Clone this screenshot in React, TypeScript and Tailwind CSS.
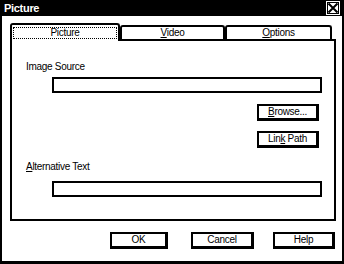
import React from "react";

const font = { fontFamily: '"Liberation Sans", Arial, sans-serif' };

function Btn({ w, children }: { w: string; children: React.ReactNode }) {
  return (
    <div
      className={`${w} h-[17px] bg-white border-2 border-r-[3px] border-b-[3px] border-black flex items-center justify-center text-[10px] tracking-[-0.3px] leading-none text-black`}
    >
      {children}
    </div>
  );
}

export default function App() {
  return (
    <div
      className="w-[344px] h-[264px] bg-white border-l-2 border-r-2 border-b-[3px] border-black flex flex-col overflow-hidden"
      style={font}
    >
      {/* Title bar */}
      <div className="h-[16px] bg-black flex items-center justify-between pl-[2px] pr-[2px] shrink-0">
        <span className="text-white font-bold text-[11px] tracking-[-0.3px] leading-none">Picture</span>
        <div className="w-[14px] h-[14px] bg-white flex items-center justify-center">
          <svg width="12" height="12" viewBox="0 0 12 12">
            <path d="M1.5 1.5 L10.5 10.5 M10.5 1.5 L1.5 10.5" stroke="black" strokeWidth="2" />
            <rect x="0.5" y="0.5" width="11" height="11" fill="none" stroke="black" strokeWidth="1" />
          </svg>
        </div>
      </div>

      <div className="pl-[8px] pt-[7px] flex flex-col">
        {/* Tabs */}
        <div className="flex items-end h-[16px] text-[10px] tracking-[-0.3px]">
          <div className="relative z-10 w-[110px] h-[18px] -mb-[2px] bg-white border-2 border-b-0 border-black rounded-t-[3px] pt-[2px] pl-[1px]">
            <div className="w-[104px] h-[12px] border border-dotted border-black flex items-center justify-center leading-none">
              Picture
            </div>
          </div>
          <div className="w-[105px] h-[14px] border-2 border-b-0 border-black rounded-t-[3px] flex items-center justify-center leading-none">
            <span>
              <span className="underline">V</span>ideo
            </span>
          </div>
          <div className="w-[107px] h-[14px] border-2 border-b-0 border-black rounded-t-[3px] flex items-center justify-center leading-none">
            <span>
              <span className="underline">O</span>ptions
            </span>
          </div>
        </div>

        {/* Panel */}
        <div className="w-[326px] h-[182px] border-2 border-black flex flex-col text-[10px] tracking-[-0.3px] text-black">
          <div className="mt-[19px] ml-[14px] h-[13px] leading-[13px]">Image Source</div>
          <div className="mt-[4px] ml-[40px] w-[270px] h-[16px] border-2 border-black bg-white" />
          <div className="mt-[11px] ml-[245px]">
            <Btn w="w-[62px]">
              <span>
                <span className="underline">B</span>rowse...
              </span>
            </Btn>
          </div>
          <div className="mt-[10px] ml-[245px]">
            <Btn w="w-[62px]">
              <span>
                Lin<span className="underline">k</span> Path
              </span>
            </Btn>
          </div>
          <div className="mt-[12px] ml-[14px] h-[13px] leading-[13px]">
            <span className="underline">A</span>lternative Text
          </div>
          <div className="mt-[8px] ml-[40px] w-[270px] h-[16px] border-2 border-black bg-white" />
        </div>

        {/* Dialog buttons */}
        <div className="flex mt-[11px]">
          <div className="ml-[100px]">
            <Btn w="w-[58px]">OK</Btn>
          </div>
          <div className="ml-[23px]">
            <Btn w="w-[63px]">Cancel</Btn>
          </div>
          <div className="ml-[19px]">
            <Btn w="w-[62px]">Help</Btn>
          </div>
        </div>
      </div>
    </div>
  );
}
